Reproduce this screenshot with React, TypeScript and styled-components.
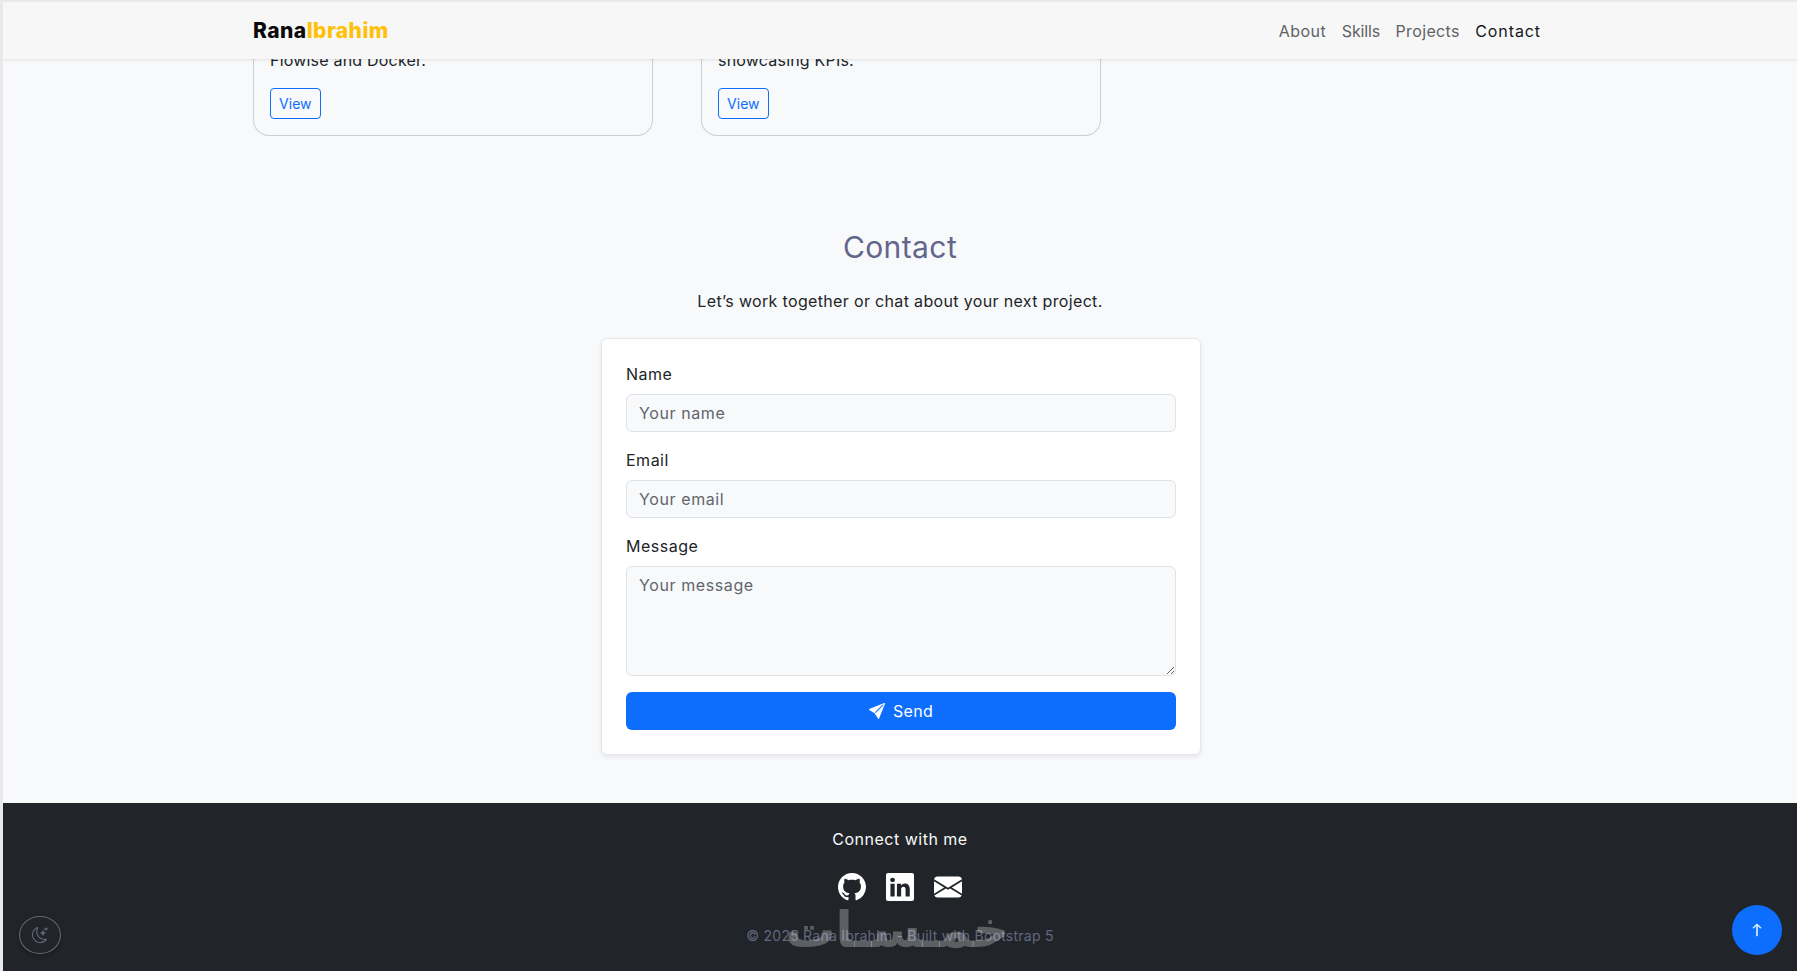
import React from "react";
import styled, { createGlobalStyle } from "styled-components";

const FONT = `Inter, "Noto Sans", "Liberation Sans", sans-serif`;

const Global = createGlobalStyle`
  * { box-sizing: border-box; }
  html, body { margin: 0; padding: 0; height: 971px; overflow: hidden; background: #e9e9ea; }
  #root { height: 971px; padding: 2px 0 0 3px; }
  body { font-family: ${FONT}; color: #212529; }
`;

const Page = styled.div`
  position: relative;
  height: 969px;
  background: #f8f9fa;
  overflow: hidden;
  display: flex;
  flex-direction: column;
`;

const NavBar = styled.nav`
  flex: 0 0 57px;
  height: 57px;
  background: #f7f7f7;
  box-shadow: 0 1px 3px rgba(0, 0, 0, 0.1);
  padding: 0 256px 0 250px;
  display: flex;
  align-items: center;
  justify-content: space-between;
  position: relative;
  z-index: 2;
`;

const Brand = styled.div`
  font-size: 21px;
  font-weight: 800;
  color: #0b0b0b;
  letter-spacing: 0.45px;
`;

const BrandAccent = styled.span`
  color: #ffc107;
`;

const NavLinks = styled.div`
  display: flex;
  gap: 15.5px;
`;

const NavLink = styled.a<{ $active?: boolean; $track: number }>`
  font-size: 16px;
  letter-spacing: ${(p) => p.$track}px;
  color: ${(p) => (p.$active ? "#14171a" : "#5f6265")};
`;

const Main = styled.main`
  flex: 1;
  display: flex;
  flex-direction: column;
  align-items: center;
  min-height: 0;
`;

const CardRow = styled.div`
  width: 1320px;
  padding: 0 12px 0 13px;
  display: grid;
  grid-template-columns: 400px 400px;
  gap: 48px;
  height: 77px;
`;

const ProjectCard = styled.div`
  height: 77px;
  border: 1px solid #cdced0;
  border-top: 0;
  border-radius: 0 0 16px 16px;
  padding: 0 16px;
  position: relative;
  overflow: hidden;
`;

const CardText = styled.p`
  margin: -8px 0 19px;
  height: 18px;
  font-size: 16px;
  line-height: 18px;
  letter-spacing: 0.2px;
`;

const ViewButton = styled.a`
  display: inline-flex;
  align-items: center;
  height: 31px;
  padding: 0 8px;
  border: 1px solid #0d6efd;
  border-radius: 4px;
  color: #0d6efd;
  font-size: 14px;
  letter-spacing: 0.05px;
`;

const Title = styled.h2`
  margin: 93px 0 0;
  font-size: 30px;
  line-height: 36px;
  font-weight: 400;
  letter-spacing: 0.4px;
  color: #62668c;
`;

const Lead = styled.p`
  margin: 24px 0 0;
  font-size: 16px;
  line-height: 24px;
  letter-spacing: 0.34px;
`;

const FormCard = styled.form`
  margin: 25px 0 0 2px;
  width: 600px;
  height: 417px;
  background: #fff;
  border: 1px solid #e4e6ea;
  border-radius: 6px;
  box-shadow: 0 2px 4px rgba(0, 0, 0, 0.08);
  padding: 23px 24px 24px;
  display: flex;
  flex-direction: column;
`;

const Label = styled.label`
  font-size: 16px;
  line-height: 24px;
  margin-bottom: 8px;
  letter-spacing: 0.5px;
`;

const Input = styled.input`
  height: 38px;
  margin-bottom: 16px;
  padding: 0 12px;
  background: #f8f9fa;
  border: 1px solid #dee2e6;
  border-radius: 6px;
  font: 16px ${FONT};
  letter-spacing: 0.6px;
  &::placeholder { color: #60666c; opacity: 1; }
`;

const TextArea = styled.textarea`
  height: 110px;
  margin-bottom: 16px;
  padding: 6px 12px;
  background: #f8f9fa;
  border: 1px solid #dee2e6;
  border-radius: 6px;
  font: 16px/24px ${FONT};
  letter-spacing: 0.6px;
  &::placeholder { color: #60666c; opacity: 1; }
`;

const SendButton = styled.button`
  height: 38px;
  background: #0d6efd;
  color: #fff;
  border: 0;
  border-radius: 6px;
  font: 16px ${FONT};
  letter-spacing: 0.3px;
  display: flex;
  align-items: center;
  justify-content: center;
  gap: 8px;
`;

const Footer = styled.footer`
  flex: 0 0 168px;
  background: #212529;
  display: flex;
  flex-direction: column;
  align-items: center;
  position: relative;
`;

const FooterTitle = styled.div`
  margin-top: 24px;
  color: #f8f9fa;
  font-size: 16px;
  line-height: 24px;
  letter-spacing: 0.5px;
`;

const Socials = styled.div`
  margin-top: 22px;
  display: flex;
  gap: 20px;
  color: #fff;
`;

const Copy = styled.div`
  margin-top: 24px;
  color: #63677e;
  font-size: 14px;
  line-height: 21px;
  letter-spacing: 0.24px;
`;

const Watermark = styled.div`
  position: absolute;
  left: 790px;
  top: 99px;
  width: 216px;
  height: 56px;
  color: rgba(255, 255, 255, 0.27);
  font: 700 50px/56px "DejaVu Sans", "Noto Sans CJK SC", sans-serif;
  text-align: start;
  white-space: nowrap;
  direction: rtl;
`;

const ThemeToggle = styled.button`
  position: absolute;
  left: 16px;
  bottom: 17px;
  width: 42px;
  height: 38px;
  border-radius: 50%;
  border: 1px solid #666a7c;
  background: transparent;
  color: #666a7c;
  box-shadow: 0 3px 4px rgba(0, 0, 0, 0.2);
  display: flex;
  align-items: center;
  justify-content: center;
  padding: 0;
`;

const ScrollTop = styled.button`
  position: absolute;
  right: 15px;
  bottom: 16px;
  width: 50px;
  height: 50px;
  border-radius: 50%;
  border: 0;
  background: #0d6efd;
  color: #fff;
  display: flex;
  align-items: center;
  justify-content: center;
  padding: 0;
`;

const Github = () => (
  <svg width="28" height="28" viewBox="0 0 16 16" fill="currentColor">
    <path d="M8 0C3.58 0 0 3.58 0 8c0 3.54 2.29 6.53 5.47 7.59.4.07.55-.17.55-.38 0-.19-.01-.82-.01-1.49-2.01.37-2.53-.49-2.69-.94-.09-.23-.48-.94-.82-1.13-.28-.15-.68-.52-.01-.53.63-.01 1.08.58 1.23.82.72 1.21 1.87.87 2.33.66.07-.52.28-.87.51-1.07-1.78-.2-3.64-.89-3.64-3.95 0-.87.31-1.59.82-2.15-.08-.2-.36-1.02.08-2.12 0 0 .67-.21 2.2.82.64-.18 1.32-.27 2-.27s1.36.09 2 .27c1.53-1.04 2.2-.82 2.2-.82.44 1.1.16 1.92.08 2.12.51.56.82 1.27.82 2.15 0 3.07-1.87 3.75-3.65 3.95.29.25.54.73.54 1.48 0 1.07-.01 1.93-.01 2.2 0 .21.15.46.55.38A8.01 8.01 0 0 0 16 8c0-4.42-3.58-8-8-8" />
  </svg>
);

const Linkedin = () => (
  <svg width="28" height="28" viewBox="0 0 16 16" fill="currentColor">
    <path d="M0 1.146C0 .513.526 0 1.175 0h13.65C15.474 0 16 .513 16 1.146v13.708c0 .633-.526 1.146-1.175 1.146H1.175C.526 16 0 15.487 0 14.854zm4.943 12.248V6.169H2.542v7.225zm-1.2-8.212c.837 0 1.358-.554 1.358-1.248-.015-.709-.52-1.248-1.342-1.248S2.4 3.226 2.4 3.934c0 .694.521 1.248 1.327 1.248zm4.908 8.212V9.359c0-.216.016-.432.08-.586.173-.431.568-.878 1.232-.878.869 0 1.216.662 1.216 1.634v3.865h2.401V9.25c0-2.22-1.184-3.252-2.764-3.252-1.274 0-1.845.7-2.165 1.193v.025h-.016l.016-.025V6.169h-2.4c.03.678 0 7.225 0 7.225z" />
  </svg>
);

const Envelope = () => (
  <svg width="28" height="28" viewBox="0 0 16 16" fill="currentColor">
    <path d="M.05 3.555A2 2 0 0 1 2 2h12a2 2 0 0 1 1.95 1.555L8 8.414zM0 4.697v7.104l5.803-3.558zM6.761 8.83l-6.57 4.027A2 2 0 0 0 2 14h12a2 2 0 0 0 1.808-1.144l-6.57-4.027L8 9.586zm3.436-.586L16 11.801V4.697z" />
  </svg>
);

const Send = () => (
  <svg width="16" height="16" viewBox="0 0 16 16" fill="currentColor">
    <path d="M15.964.686a.5.5 0 0 0-.65-.65L.767 5.855H.766l-.452.18a.5.5 0 0 0-.082.887l.41.26.001.002 4.995 3.178 3.178 4.995.002.002.26.41a.5.5 0 0 0 .886-.083zm-1.833 1.89L6.637 10.07l-.215-.338a.5.5 0 0 0-.154-.154l-.338-.215 7.494-7.494 1.178-.471z" />
  </svg>
);

const Moon = () => (
  <svg width="16" height="16" viewBox="0 0 16 16" fill="currentColor">
    <path d="M6 .278a.77.77 0 0 1 .08.858 7.2 7.2 0 0 0-.878 3.46c0 4.021 3.278 7.277 7.318 7.277q.792-.001 1.533-.16a.79.79 0 0 1 .81.316.73.73 0 0 1-.031.893A8.35 8.35 0 0 1 8.344 16C3.734 16 0 12.286 0 7.71 0 4.266 2.114 1.312 5.124.06A.75.75 0 0 1 6 .278M4.858 1.311A7.27 7.27 0 0 0 1.025 7.71c0 4.02 3.279 7.276 7.319 7.276a7.32 7.32 0 0 0 5.205-2.162q-.506.063-1.029.063c-4.61 0-8.343-3.714-8.343-8.29 0-1.167.242-2.278.681-3.286" />
    <path d="M10.794 3.148a.217.217 0 0 1 .412 0l.387 1.162c.173.518.579.924 1.097 1.097l1.162.387a.217.217 0 0 1 0 .412l-1.162.387a1.73 1.73 0 0 0-1.097 1.097l-.387 1.162a.217.217 0 0 1-.412 0l-.387-1.162A1.73 1.73 0 0 0 9.31 6.593l-1.162-.387a.217.217 0 0 1 0-.412l1.162-.387a1.73 1.73 0 0 0 1.097-1.097zM13.863.099a.145.145 0 0 1 .274 0l.258.774c.115.346.386.617.732.732l.774.258a.145.145 0 0 1 0 .274l-.774.258a1.16 1.16 0 0 0-.732.732l-.258.774a.145.145 0 0 1-.274 0l-.258-.774a1.16 1.16 0 0 0-.732-.732l-.774-.258a.145.145 0 0 1 0-.274l.774-.258c.346-.115.617-.386.732-.732z" />
  </svg>
);

const ArrowUp = () => (
  <svg width="14" height="14" viewBox="0 0 16 16" fill="currentColor" stroke="currentColor" strokeWidth="0.6">
    <path fillRule="evenodd" d="M8 15a.5.5 0 0 0 .5-.5V2.707l3.146 3.147a.5.5 0 0 0 .708-.708l-4-4a.5.5 0 0 0-.708 0l-4 4a.5.5 0 1 0 .708.708L7.5 2.707V14.5a.5.5 0 0 0 .5.5" />
  </svg>
);

export default function App() {
  return (
    <>
      <Global />
      <Page>
        <NavBar>
          <Brand>
            Rana<BrandAccent>Ibrahim</BrandAccent>
          </Brand>
          <NavLinks>
            <NavLink $track={0.5}>About</NavLink>
            <NavLink $track={-0.15}>Skills</NavLink>
            <NavLink $track={0.35}>Projects</NavLink>
            <NavLink $active $track={0.9}>Contact</NavLink>
          </NavLinks>
        </NavBar>
        <Main>
          <CardRow>
            <ProjectCard>
              <CardText>Flowise and Docker.</CardText>
              <ViewButton>View</ViewButton>
            </ProjectCard>
            <ProjectCard>
              <CardText>showcasing KPIs.</CardText>
              <ViewButton>View</ViewButton>
            </ProjectCard>
          </CardRow>
          <Title>Contact</Title>
          <Lead>Let’s work together or chat about your next project.</Lead>
          <FormCard>
            <Label>Name</Label>
            <Input placeholder="Your name" />
            <Label>Email</Label>
            <Input placeholder="Your email" />
            <Label>Message</Label>
            <TextArea placeholder="Your message" />
            <SendButton type="button">
              <Send />
              Send
            </SendButton>
          </FormCard>
        </Main>
        <Footer>
          <FooterTitle>Connect with me</FooterTitle>
          <Socials>
            <Github />
            <Linkedin />
            <Envelope />
          </Socials>
          <Copy>© 2025 Rana Ibrahim - Built with Bootstrap 5</Copy>
          <Watermark>خمـسـات</Watermark>
          <ThemeToggle>
            <Moon />
          </ThemeToggle>
          <ScrollTop>
            <ArrowUp />
          </ScrollTop>
        </Footer>
      </Page>
    </>
  );
}
